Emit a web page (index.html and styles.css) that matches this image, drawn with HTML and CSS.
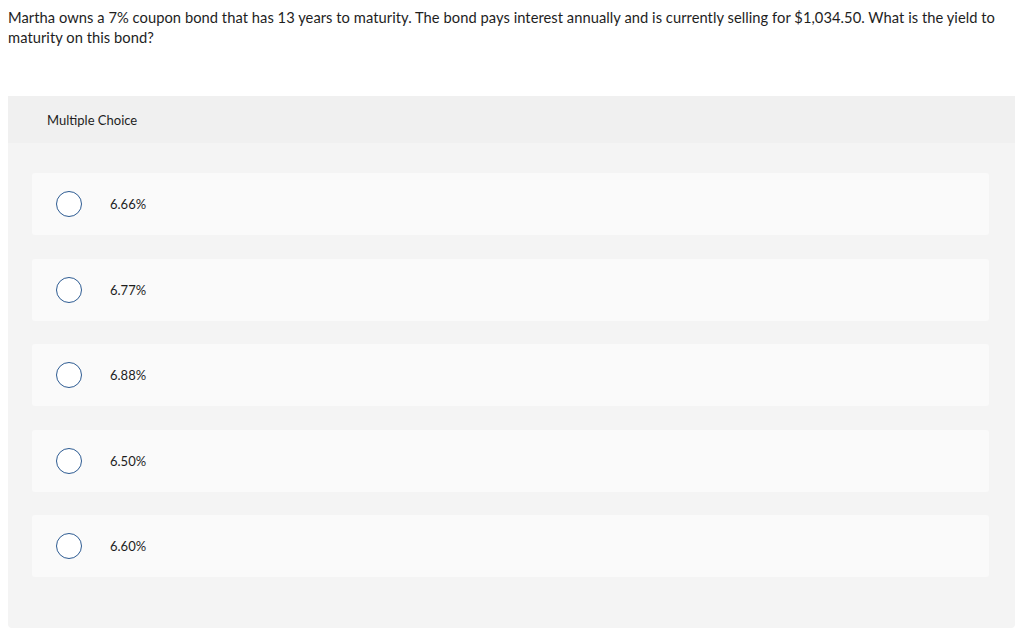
FILE: index.html
```html
<!DOCTYPE html>
<html>
<head>
<meta charset="utf-8">
<link rel="stylesheet" href="styles.css">
</head>
<body>
<p class="question">Martha owns a 7% coupon bond that has 13 years to maturity. The bond pays interest annually and is currently selling for $1,034.50. What is the yield to maturity on this bond?</p>
<div class="mc">
  <div class="mc-head">Multiple Choice</div>
  <div class="mc-body">
    <div class="opt"><span class="radio"></span><span class="label">6.66%</span></div>
    <div class="opt"><span class="radio"></span><span class="label">6.77%</span></div>
    <div class="opt"><span class="radio"></span><span class="label">6.88%</span></div>
    <div class="opt"><span class="radio"></span><span class="label">6.50%</span></div>
    <div class="opt"><span class="radio"></span><span class="label">6.60%</span></div>
  </div>
</div>
</body>
</html>
```
FILE: styles.css
```css
body {
  margin: 0;
  padding: 0 8px;
  font-family: Lato, "Open Sans", sans-serif;
  color: #1e1e1e;
  background: #fff;
}
.question {
  margin: 0;
  padding-top: 7px;
  font-size: 14.7px;
  letter-spacing: 0.05px;
  line-height: 20px;
  height: 89px;
  width: 1006px;
}
.mc {
  width: 1007px;
  background: #f4f4f4;
  border-radius: 0 0 4px 4px;
}
.mc-head {
  background: #f0f0f0;
  height: 47px;
  display: flex;
  align-items: center;
  padding-left: 39px;
  font-size: 13px;
}
.mc-body {
  padding: 30px 26px 51px 24px;
  display: flex;
  flex-direction: column;
  gap: 23.5px;
}
.opt {
  height: 62px;
  background: #fafafa;
  border-radius: 3px;
  display: flex;
  align-items: center;
  padding-left: 24px;
}
.radio {
  width: 24px;
  height: 24px;
  border: 1px solid #2d5b92;
  border-radius: 50%;
  background: #fff;
  flex: none;
}
.label {
  margin-left: 28px;
  font-size: 13px;
}
```
